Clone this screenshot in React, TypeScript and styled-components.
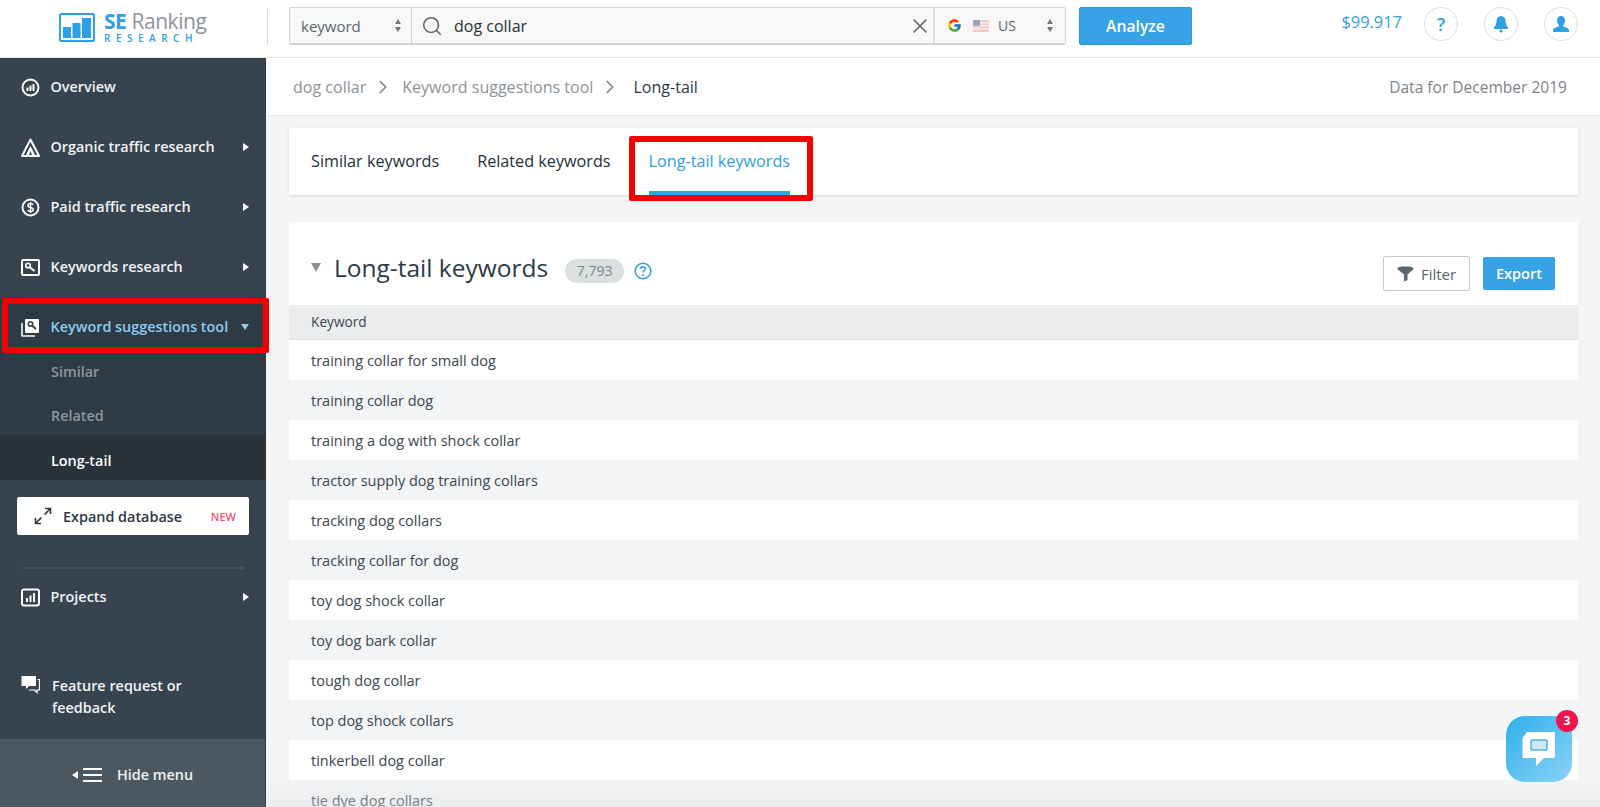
import React from 'react';
import styled, {createGlobalStyle} from 'styled-components';
import {ChevronRight, Search, X} from 'lucide-react';
import {FcGoogle} from 'react-icons/fc';

const GlobalStyle = createGlobalStyle`
  html, body {
    margin: 0;
    height: 100%;
    overflow: hidden;
    font-family: 'Open Sans', 'Liberation Sans', sans-serif;
    color: #2c3a45;
  }

  * {
    box-sizing: border-box;
  }
`;

const Page = styled.div`
  display: flex;
  flex-direction: column;
  height: 100vh;
  overflow: hidden;
  position: relative;
`;

/* top bar */

const Header = styled.header`
  align-items: flex-start;
  background-color: #fff;
  border-bottom: 1px solid #e3e4e5;
  display: flex;
  flex: 0 0 58px;
  padding-top: 7px;
  position: relative;
  z-index: 2;
`;

const LogoArea = styled.div`
  align-items: center;
  border-right: 1px solid #d9dadb;
  display: flex;
  gap: 9px;
  height: 36px;
  margin-top: 2px;
  padding-left: 59px;
  width: 268px;
`;

const LogoText = styled.div`
  display: flex;
  flex-direction: column;
  line-height: 1;
`;

const LogoName = styled.div`
  color: #8d959b;
  font-size: 21px;
  height: 22px;
  letter-spacing: -0.45px;
  line-height: 22px;

  b {
    color: #2f9fe8;
    font-weight: 700;
    margin-right: 5px;
  }
`;

const LogoSub = styled.div`
  color: #2f9fe8;
  font-size: 10px;
  font-weight: 600;
  letter-spacing: 5.5px;
  line-height: 12px;
`;

const SearchGroup = styled.div`
  background-color: #f8f8f8;
  border: 1px solid #d2d3d4;
  border-bottom-width: 2px;
  border-radius: 2px;
  display: flex;
  height: 38px;
  margin-left: 21px;
  width: 777px;
`;

const TypeSelect = styled.div`
  align-items: center;
  border-right: 1px solid #d2d3d4;
  color: #5d666d;
  display: flex;
  font-size: 15px;
  justify-content: space-between;
  padding: 0 10px 0 11px;
  width: 122px;
`;

const SearchField = styled.div`
  align-items: center;
  color: #5f6569;
  display: flex;
  flex: 1;
  font-size: 16px;
  padding: 0 1px 0 9px;
`;

const SearchValue = styled.span`
  color: #24303a;
  flex: 1;
  margin-left: 11px;
`;

const RegionSelect = styled.div`
  align-items: center;
  border-left: 2px solid #dfe0e1;
  color: #5d666d;
  display: flex;
  font-size: 14px;
  width: 132px;
  padding: 0 12px 0 12px;
`;

const RegionCode = styled.span`
  flex: 1;
  margin-left: 9px;
`;

const Stepper = styled.span`
  display: flex;
  flex-direction: column;
  gap: 3px;

  &::before, &::after {
    border-left: 3.5px solid transparent;
    border-right: 3.5px solid transparent;
    content: '';
  }

  &::before {
    border-bottom: 5px solid #6f7880;
  }

  &::after {
    border-top: 5px solid #6f7880;
  }
`;

const AnalyzeButton = styled.button`
  background-color: #37a2e6;
  border: 1px solid #2f97da;
  border-radius: 2px;
  color: #fff;
  font-family: inherit;
  font-size: 15.7px;
  font-weight: 600;
  height: 38px;
  margin-left: 13px;
  width: 113px;
`;

const Balance = styled.div`
  color: #2f9fe8;
  font-size: 16.4px;
  margin-left: auto;
  margin-top: 3px;
`;

const RoundButton = styled.div`
  align-items: center;
  border: 1px solid #dcdddd;
  border-radius: 50%;
  color: #2f9fe8;
  display: flex;
  font-size: 18px;
  font-weight: 600;
  height: 34px;
  justify-content: center;
  margin-left: 22px;
  width: 34px;
`;

const HeaderActions = styled.div`
  align-items: flex-start;
  display: flex;
  margin-left: 0;
  padding-right: 22px;

  ${RoundButton}:nth-child(n + 2) {
    margin-left: 26px;
  }
`;

/* sidebar */

const Body = styled.div`
  display: flex;
  flex: 1;
  min-height: 0;
`;

const Sidebar = styled.aside`
  background-color: #37444f;
  border-right: 1px solid #2f3b45;
  display: flex;
  flex: 0 0 266px;
  flex-direction: column;
  margin-top: -1px;
`;

const NavItem = styled.div<{$active?: boolean}>`
  align-items: center;
  color: ${({$active}) => ($active ? '#8ccbf3' : '#f1f3f5')};
  display: flex;
  font-size: 14.4px;
  font-weight: 600;
  height: 60px;
  padding: 0 16px 0 21px;
  position: relative;
`;

const NavIcon = styled.svg`
  flex: 0 0 19px;
  height: 19px;
  margin-right: 10.5px;
  width: 19px;
`;

const NavLabel = styled.span`
  flex: 1;
  margin-top: -1px;
`;

const ArrowRight = styled.span`
  border-bottom: 4px solid transparent;
  border-left: 6px solid #fff;
  border-top: 4px solid transparent;
`;

const ArrowDown = styled.span`
  border-left: 4px solid transparent;
  border-right: 4px solid transparent;
  border-top: 6px solid #8ccbf3;
`;

const ExpandedGroup = styled.div`
  background-color: #2e3a44;
`;

const SubList = styled.div`
  display: flex;
  flex-direction: column;
  margin-top: -7px;
`;

const SubItem = styled.div<{$active?: boolean}>`
  background-color: ${({$active}) => ($active ? '#27323b' : 'transparent')};
  color: ${({$active}) => ($active ? '#fff' : '#8e979e')};
  font-size: 14.4px;
  font-weight: 600;
  line-height: 20px;
  margin-top: ${({$active}) => ($active ? '-3px' : '0')};
  padding: ${({$active}) => ($active ? '16px 0 9px 51px' : '12px 0 12px 51px')};
`;

const ExpandButton = styled.div`
  align-items: center;
  background-color: #fff;
  border-radius: 2px;
  color: #2c3a45;
  display: flex;
  flex: 0 0 38px;
  font-size: 14.4px;
  font-weight: 600;
  margin: 17px 16px 0 17px;
  padding: 0 13px 0 17px;
`;

const ExpandLabel = styled.span`
  flex: 1;
  margin-left: 11px;
`;

const NewTag = styled.span`
  color: #f2566f;
  font-size: 11px;
`;

const NavDivider = styled.div`
  background-color: #46535e;
  flex: 0 0 2px;
  margin: 32px 21px 0 22px;
`;

const ProjectsItem = styled(NavItem)`
  flex: 0 0 60px;
  margin-top: -2px;
`;

const FeatureRow = styled.div`
  color: #f1f3f5;
  display: flex;
  font-size: 14.4px;
  font-weight: 600;
  line-height: 22px;
  margin-top: auto;
  padding: 0 40px 20px 21px;
`;

const FeatureIcon = styled(NavIcon)`
  margin-right: 12px;
  margin-top: 0;
`;

const HideMenu = styled.div`
  align-items: center;
  background-color: #4b5861;
  color: #f1f3f5;
  display: flex;
  flex: 0 0 68px;
  font-size: 14.4px;
  font-weight: 600;
  justify-content: center;
  padding-top: 3px;
`;

const ArrowLeft = styled.span`
  border-bottom: 4px solid transparent;
  border-right: 6px solid #fff;
  border-top: 4px solid transparent;
  margin-right: 5px;
`;

const Burger = styled.span`
  border-bottom: 2px solid #fff;
  border-top: 2px solid #fff;
  height: 14px;
  margin-right: 15px;
  position: relative;
  width: 19px;

  &::after {
    background-color: #fff;
    content: '';
    height: 2px;
    left: 0;
    position: absolute;
    right: 0;
    top: 4px;
  }
`;

const Highlight = styled.div`
  border: 6px solid #f50000;
  border-radius: 2px;
  pointer-events: none;
  position: absolute;
  z-index: 3;
`;

const NavHighlight = styled(Highlight)`
  inset: 1px -4px 4px 2px;
`;

const TabHighlight = styled(Highlight)`
  bottom: -10px;
  left: -20px;
  right: -23px;
  top: 8px;
`;

/* main area */

const Main = styled.main`
  background-color: #f5f5f5;
  display: flex;
  flex: 1;
  flex-direction: column;
  min-width: 0;
  overflow: hidden;
`;

const CrumbBar = styled.div`
  align-items: center;
  background-color: #fff;
  border-bottom: 1px solid #e8e8e8;
  display: flex;
  flex: 0 0 58px;
  font-size: 16px;
  letter-spacing: 0.02px;
  padding: 0 33px 0 27px;
`;

const Crumb = styled.span<{$current?: boolean}>`
  color: ${({$current}) => ($current ? '#2c3a45' : '#8c949a')};
  font-weight: ${({$current}) => ($current ? 500 : 400)};
  margin-left: ${({$current}) => ($current ? '4px' : '0')};
`;

const CrumbArrow = styled(ChevronRight)`
  color: #7f878d;
  margin: 0 8px 0 6px;
`;

const DataDate = styled.span`
  color: #7e8489;
  font-size: 15.5px;
  margin-left: auto;
`;

const Content = styled.div`
  display: flex;
  flex-direction: column;
  padding: 12px 22px 0 23px;
`;

const TabsCard = styled.div`
  background-color: #fff;
  box-shadow: 0 1px 3px rgba(0, 0, 0, 0.12);
  display: flex;
  gap: 38px;
  height: 67px;
  padding-left: 22px;
`;

const Tab = styled.div<{$active?: boolean}>`
  border-bottom: 4px solid ${({$active}) => ($active ? '#37a2e6' : 'transparent')};
  color: ${({$active}) => ($active ? '#2f9fe8' : '#24303a')};
  font-size: 16.2px;
  font-weight: 500;
  line-height: 20px;
  padding-top: 23px;
  position: relative;
`;

const ResultsCard = styled.section`
  background-color: #fff;
  margin-top: 27px;
`;

const CardHeader = styled.div`
  align-items: center;
  display: flex;
  height: 83px;
  padding: 20px 23px 0 22px;
`;

const TitleGroup = styled.div`
  align-items: center;
  display: flex;
  position: relative;
  top: -3px;
`;

const CollapseArrow = styled.span`
  border-left: 5.5px solid transparent;
  border-right: 5.5px solid transparent;
  border-top: 9px solid #8a9096;
  margin-right: 13px;
  position: relative;
  top: -3px;
`;

const CardTitle = styled.h2`
  color: #2c3a45;
  font-size: 24.5px;
  font-weight: 400;
  margin: 0;
  position: relative;
  top: -3px;
`;

const CountBadge = styled.span`
  background-color: #dcdfe0;
  border-radius: 12px;
  color: #7e858a;
  font-size: 14px;
  height: 24px;
  line-height: 24px;
  margin-left: 17px;
  text-align: center;
  width: 59px;
`;

const HelpIcon = styled.svg`
  height: 18px;
  margin-left: 10px;
  width: 18px;
`;

const FilterButton = styled.div`
  align-items: center;
  border: 1px solid #c6c8ca;
  border-radius: 2px;
  color: #5c656c;
  display: flex;
  font-size: 15px;
  font-weight: 500;
  gap: 7px;
  height: 35px;
  justify-content: center;
  margin-left: auto;
  width: 87px;
`;

const ExportButton = styled.div`
  align-items: center;
  background-color: #37a2e6;
  border-radius: 2px;
  color: #fff;
  display: flex;
  font-size: 14.5px;
  font-weight: 600;
  height: 33px;
  justify-content: center;
  margin-left: 13px;
  width: 72px;
`;

const TableHead = styled.div`
  align-items: center;
  background-color: #ebecee;
  border-bottom: 1px solid #e0e1e3;
  color: #3a4650;
  display: flex;
  font-size: 13.7px;
  font-weight: 500;
  height: 35px;
  padding: 0 0 2px 22px;
`;

const Row = styled.div`
  align-items: center;
  color: #3a4650;
  display: flex;
  font-size: 14.5px;
  height: 40px;
  padding-left: 22px;

  &:nth-child(even) {
    background-color: #f4f5f7;
  }
`;

const BottomFade = styled.div`
  background: linear-gradient(to bottom, rgba(225, 226, 226, 0), rgba(225, 226, 226, 0.45));
  bottom: 0;
  height: 28px;
  left: 267px;
  pointer-events: none;
  position: absolute;
  right: 0;
`;

const ChatWidget = styled.div`
  align-items: center;
  background: linear-gradient(135deg, #2fb0ea, #8bd2f6);
  border-radius: 19px;
  bottom: 25px;
  display: flex;
  height: 66px;
  justify-content: center;
  position: absolute;
  right: 28px;
  width: 66px;
`;

const ChatBadge = styled.span`
  background-color: #f0134d;
  border-radius: 50%;
  color: #fff;
  font-size: 12px;
  font-weight: 700;
  height: 22px;
  line-height: 22px;
  position: absolute;
  right: -6px;
  text-align: center;
  top: -6px;
  width: 22px;
`;

const keywords = [
    'training collar for small dog',
    'training collar dog',
    'training a dog with shock collar',
    'tractor supply dog training collars',
    'tracking dog collars',
    'tracking collar for dog',
    'toy dog shock collar',
    'toy dog bark collar',
    'tough dog collar',
    'top dog shock collars',
    'tinkerbell dog collar',
    'tie dye dog collars',
];

const OverviewIcon = () => (
    <NavIcon viewBox="0 0 19 19">
        <circle cx="9.5" cy="9.5" r="8" fill="none" stroke="#fff" strokeWidth="2"/>
        <path d="M5.5 9.5h2v3.5h-2zM8.5 7.5h2V13h-2zM11.5 6h2v7h-2z" fill="#fff"/>
    </NavIcon>
);

const OrganicIcon = () => (
    <NavIcon viewBox="0 0 19 19">
        <path d="M9.5 1.5 18 18H1z" fill="none" stroke="#fff" strokeWidth="2" strokeLinejoin="round"/>
        <path d="M9.5 8 5 17h3l1.5-4 1.5 4h3z" fill="#fff"/>
    </NavIcon>
);

const PaidIcon = () => (
    <NavIcon viewBox="0 0 19 19">
        <circle cx="9.5" cy="9.5" r="8" fill="none" stroke="#fff" strokeWidth="2"/>
        <path d="M12.2 6.8c-.5-.9-1.500-1.300-2.700-1.300-1.500 0-2.600.8-2.600 2s1 1.700 2.600 2 2.700.8 2.700 2-1.200 2-2.700 2c-1.300 0-2.300-.5-2.800-1.400M9.500 4v11" fill="none" stroke="#fff" strokeWidth="1.400"/>
    </NavIcon>
);

const KeywordsIcon = () => (
    <NavIcon viewBox="0 0 19 19">
        <rect x="1" y="2" width="17" height="15" rx="1" fill="none" stroke="#fff" strokeWidth="2"/>
        <circle cx="7" cy="7.500" r="2.300" fill="none" stroke="#fff" strokeWidth="1.600"/>
        <path d="m8.500 9 5 4" stroke="#fff" strokeWidth="2"/>
    </NavIcon>
);

const SuggestionsIcon = () => (
    <NavIcon viewBox="0 0 19 19">
        <path d="M1 5v12.500a.5.5 0 0 0 .5.5H14" fill="none" stroke="#fff" strokeWidth="1.600"/>
        <rect x="4" y="1" width="14" height="14" rx="1" fill="#fff"/>
        <circle cx="9.500" cy="6" r="2.200" fill="none" stroke="#2e3a44" strokeWidth="1.500"/>
        <path d="m11 7.500 4 3.500" stroke="#2e3a44" strokeWidth="1.800"/>
    </NavIcon>
);

const ProjectsIcon = () => (
    <NavIcon viewBox="0 0 19 19">
        <rect x="1" y="1.500" width="17" height="16" rx="2" fill="none" stroke="#fff" strokeWidth="2"/>
        <path d="M5 10h2v4H5zM8.500 7.500h2V14h-2zM12 5h2v9h-2z" fill="#fff"/>
    </NavIcon>
);

const FeedbackIcon = () => (
    <FeatureIcon viewBox="0 0 19 19">
        <path d="M.5 1h14.500v10H8l-3 3v-3H.5z" fill="#fff"/>
        <path d="M16.500 4.500h2V15H16v2.500L13.500 15H8" fill="none" stroke="#fff" strokeWidth="1.200"/>
    </FeatureIcon>
);

const App = (): JSX.Element => {
    return (
        <Page>
            <GlobalStyle/>
            <Header>
                <LogoArea>
                    <svg width="36" height="29" viewBox="0 0 36 29">
                        <rect x="1" y="1" width="34" height="27" rx="1.500" fill="none" stroke="#2f9fe8" strokeWidth="2"/>
                        <path d="M4 14h8v11H4zM13.500 10h8v15h-8zM23 5h9v20h-9z" fill="#2f9fe8"/>
                    </svg>
                    <LogoText>
                        <LogoName><b>SE</b>Ranking</LogoName>
                        <LogoSub>RESEARCH</LogoSub>
                    </LogoText>
                </LogoArea>

                <SearchGroup>
                    <TypeSelect>keyword<Stepper/></TypeSelect>
                    <SearchField>
                        <Search size={22} strokeWidth={1.7}/>
                        <SearchValue>dog collar</SearchValue>
                        <X size={24} strokeWidth={1.6}/>
                    </SearchField>
                    <RegionSelect>
                        <FcGoogle size={15}/>
                        <svg width="16" height="12" viewBox="0 0 16 12" style={{marginLeft: 11}}>
                            <rect width="16" height="12" fill="#f5c6c6"/>
                            <path d="M0 2h16v1.500H0zM0 5h16v1.500H0zM0 8h16v1.500H0z" fill="#fbeeee"/>
                            <rect width="7" height="6" fill="#9aa4bd"/>
                        </svg>
                        <RegionCode>US</RegionCode>
                        <Stepper/>
                    </RegionSelect>
                </SearchGroup>

                <AnalyzeButton>Analyze</AnalyzeButton>

                <Balance>$99.917</Balance>
                <HeaderActions>
                    <RoundButton>?</RoundButton>
                    <RoundButton>
                        <svg width="16" height="18" viewBox="0 0 16 18">
                            <path d="M8 1c3 0 4.500 2.200 4.500 5 0 3 1 5 2.500 6.500V14H1v-1.500C2.500 11 3.500 9 3.500 6 3.500 3.200 5 1 8 1z" fill="#2f9fe8"/>
                            <circle cx="8" cy="16" r="1.500" fill="#2f9fe8"/>
                        </svg>
                    </RoundButton>
                    <RoundButton>
                        <svg width="18" height="18" viewBox="0 0 18 18">
                            <path d="M9 1c2.500 0 4 1.800 4 4.500 0 1.800-.7 3.500-1.700 4.500v1.500c2 .8 5.700 1.300 5.700 4V17H1v-1.500c0-2.700 3.700-3.200 5.700-4V10C5.700 9 5 7.300 5 5.500 5 2.800 6.500 1 9 1z" fill="#2f9fe8"/>
                        </svg>
                    </RoundButton>
                </HeaderActions>
            </Header>

            <Body>
                <Sidebar>
                    <NavItem><OverviewIcon/><NavLabel>Overview</NavLabel></NavItem>
                    <NavItem><OrganicIcon/><NavLabel>Organic traffic research</NavLabel><ArrowRight/></NavItem>
                    <NavItem><PaidIcon/><NavLabel>Paid traffic research</NavLabel><ArrowRight/></NavItem>
                    <NavItem><KeywordsIcon/><NavLabel>Keywords research</NavLabel><ArrowRight/></NavItem>
                    <ExpandedGroup>
                        <NavItem $active>
                            <SuggestionsIcon/>
                            <NavLabel>Keyword suggestions tool</NavLabel>
                            <ArrowDown/>
                            <NavHighlight/>
                        </NavItem>
                        <SubList>
                            <SubItem>Similar</SubItem>
                            <SubItem>Related</SubItem>
                            <SubItem $active>Long-tail</SubItem>
                        </SubList>
                    </ExpandedGroup>
                    <ExpandButton>
                        <svg width="18" height="18" viewBox="0 0 18 18">
                            <path d="M11 1.500h5.500V7M16.500 1.500 10.500 7.500M7 16.500H1.500V11M1.500 16.500l6-6" fill="none" stroke="#2c3a45" strokeWidth="1.600"/>
                        </svg>
                        <ExpandLabel>Expand database</ExpandLabel>
                        <NewTag>NEW</NewTag>
                    </ExpandButton>
                    <NavDivider/>
                    <ProjectsItem><ProjectsIcon/><NavLabel>Projects</NavLabel><ArrowRight/></ProjectsItem>
                    <FeatureRow><FeedbackIcon/><span>Feature request or feedback</span></FeatureRow>
                    <HideMenu><ArrowLeft/><Burger/>Hide menu</HideMenu>
                </Sidebar>

                <Main>
                    <CrumbBar>
                        <Crumb>dog collar</Crumb>
                        <CrumbArrow size={22} strokeWidth={1.9}/>
                        <Crumb>Keyword suggestions tool</Crumb>
                        <CrumbArrow size={22} strokeWidth={1.9}/>
                        <Crumb $current>Long-tail</Crumb>
                        <DataDate>Data for December 2019</DataDate>
                    </CrumbBar>
                    <Content>
                        <TabsCard>
                            <Tab>Similar keywords</Tab>
                            <Tab>Related keywords</Tab>
                            <Tab $active>Long-tail keywords<TabHighlight/></Tab>
                        </TabsCard>
                        <ResultsCard>
                            <CardHeader>
                                <TitleGroup>
                                    <CollapseArrow/>
                                    <CardTitle>Long-tail keywords</CardTitle>
                                    <CountBadge>7,793</CountBadge>
                                    <HelpIcon viewBox="0 0 18 18">
                                        <circle cx="9" cy="9" r="7.800" fill="none" stroke="#2f9fe8" strokeWidth="1.600"/>
                                        <path d="M6.500 7c0-1.500 1.100-2.300 2.500-2.300s2.500.8 2.500 2.100c0 1.700-2.500 1.900-2.500 3.700" fill="none" stroke="#2f9fe8" strokeWidth="1.500"/>
                                        <circle cx="9" cy="13" r="1" fill="#2f9fe8"/>
                                    </HelpIcon>
                                </TitleGroup>
                                <FilterButton>
                                    <svg width="17" height="16" viewBox="0 0 17 16">
                                        <path d="M.5 2.500C.5 1 4 .5 8.500.5s8 .5 8 2c0 .8-.6 1.400-1.600 2L10.500 8.500V14L7 15.500v-7L2.100 4.500C1.100 3.900.5 3.300.5 2.500z" fill="#5c656c"/>
                                    </svg>
                                    Filter
                                </FilterButton>
                                <ExportButton>Export</ExportButton>
                            </CardHeader>
                            <TableHead>Keyword</TableHead>
                            <div>
                                {keywords.map((keyword) => (
                                    <Row key={keyword}>{keyword}</Row>
                                ))}
                            </div>
                        </ResultsCard>
                    </Content>
                </Main>
            </Body>

            <BottomFade/>
            <ChatWidget>
                <svg width="34" height="36" viewBox="0 0 34 36">
                    <path d="M5 1h28v24a2 2 0 0 1-2 2H22l-8 8v-8H2a1.500 1.500 0 0 1-1.500-1.500V7z" fill="#fff"/>
                    <rect x="9" y="9" width="16" height="10" rx="1" fill="#cfe8f7" stroke="#4db4ea" strokeWidth="1.500"/>
                </svg>
                <ChatBadge>3</ChatBadge>
            </ChatWidget>
        </Page>
    );
};

export default App;
